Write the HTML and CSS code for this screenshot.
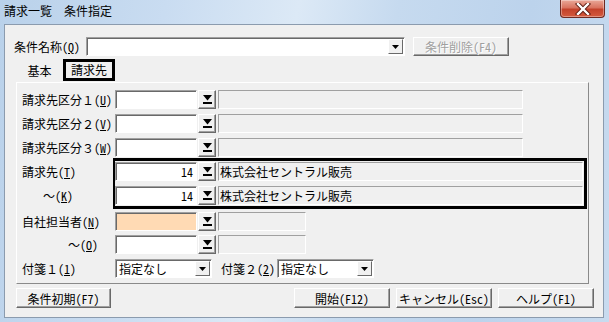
FILE: index.html
```html
<!DOCTYPE html>
<html lang="ja">
<head>
<meta charset="utf-8">
<title>請求一覧 条件指定</title>
<link rel="stylesheet" href="styles.css">
</head>
<body>
<div class="window">
  <div class="titlebar">
    <span class="title">請求一覧　条件指定</span>
    <div class="close">
      <svg width="16" height="12" viewBox="0 0 16 12"><path d="M3 1 L13 11 M13 1 L3 11" stroke="#5a1a10" stroke-width="4.2" stroke-linecap="square"/><path d="M3 1 L13 11 M13 1 L3 11" stroke="#fff" stroke-width="2.4" stroke-linecap="square"/></svg>
    </div>
  </div>
  <div class="client">
    <div class="toprow">
      <span class="lbl-top">条件名称<span class="hw">(<u>Q</u>)</span></span>
      <div class="combo">
        <span class="combo-text"></span>
        <span class="sbtn"><svg width="7" height="4" viewBox="0 0 7 4"><path d="M0 0H7L3.5 4Z" fill="#000"/></svg></span>
      </div>
      <button class="btn disabled del">条件削除<span class="hw">(F4)</span></button>
    </div>
    <div class="tabs">
      <div class="tab">基本</div>
      <div class="tab sel">請求先</div>
    </div>
    <div class="panel">
      <div class="row">
        <span class="lbl">請求先区分１<span class="hw">(<u>U</u>)</span></span>
        <span class="tb"></span>
        <span class="dd"><svg width="9" height="9" viewBox="0 0 9 9"><path d="M0 0H9L4.5 5.5Z" fill="#000"/><rect x="0" y="7" width="9" height="2" fill="#000"/></svg></span>
        <span class="ro w305"></span>
      </div>
      <div class="row">
        <span class="lbl">請求先区分２<span class="hw">(<u>V</u>)</span></span>
        <span class="tb"></span>
        <span class="dd"><svg width="9" height="9" viewBox="0 0 9 9"><path d="M0 0H9L4.5 5.5Z" fill="#000"/><rect x="0" y="7" width="9" height="2" fill="#000"/></svg></span>
        <span class="ro w305"></span>
      </div>
      <div class="row">
        <span class="lbl">請求先区分３<span class="hw">(<u>W</u>)</span></span>
        <span class="tb"></span>
        <span class="dd"><svg width="9" height="9" viewBox="0 0 9 9"><path d="M0 0H9L4.5 5.5Z" fill="#000"/><rect x="0" y="7" width="9" height="2" fill="#000"/></svg></span>
        <span class="ro w305"></span>
      </div>
      <div class="group">
        <div class="glabels">
          <span class="glbl">請求先<span class="hw">(<u>T</u>)</span></span>
          <span class="glbl ind1">～<span class="hw">(<u>K</u>)</span></span>
        </div>
        <div class="focusbox">
          <div class="frow">
            <span class="tb num hw">14</span>
            <span class="dd"><svg width="9" height="9" viewBox="0 0 9 9"><path d="M0 0H9L4.5 5.5Z" fill="#000"/><rect x="0" y="7" width="9" height="2" fill="#000"/></svg></span>
            <span class="ro grow">株式会社セントラル販売</span>
          </div>
          <div class="frow">
            <span class="tb num hw">14</span>
            <span class="dd"><svg width="9" height="9" viewBox="0 0 9 9"><path d="M0 0H9L4.5 5.5Z" fill="#000"/><rect x="0" y="7" width="9" height="2" fill="#000"/></svg></span>
            <span class="ro grow">株式会社セントラル販売</span>
          </div>
        </div>
      </div>
      <div class="row r-staff">
        <span class="lbl">自社担当者<span class="hw">(<u>N</u>)</span></span>
        <span class="tb peach"></span>
        <span class="dd"><svg width="9" height="9" viewBox="0 0 9 9"><path d="M0 0H9L4.5 5.5Z" fill="#000"/><rect x="0" y="7" width="9" height="2" fill="#000"/></svg></span>
        <span class="ro w88"></span>
      </div>
      <div class="row r-staff2">
        <span class="lbl ind2">～<span class="hw">(<u>O</u>)</span></span>
        <span class="tb"></span>
        <span class="dd"><svg width="9" height="9" viewBox="0 0 9 9"><path d="M0 0H9L4.5 5.5Z" fill="#000"/><rect x="0" y="7" width="9" height="2" fill="#000"/></svg></span>
        <span class="ro w88"></span>
      </div>
      <div class="row r-tag">
        <span class="lbl">付箋１<span class="hw">(<u>1</u>)</span></span>
        <div class="select">
          <span class="sel-text">指定なし</span>
          <span class="sbtn"><svg width="7" height="4" viewBox="0 0 7 4"><path d="M0 0H7L3.5 4Z" fill="#000"/></svg></span>
        </div>
        <span class="lbl2">付箋２<span class="hw">(<u>2</u>)</span></span>
        <div class="select">
          <span class="sel-text">指定なし</span>
          <span class="sbtn"><svg width="7" height="4" viewBox="0 0 7 4"><path d="M0 0H7L3.5 4Z" fill="#000"/></svg></span>
        </div>
      </div>
    </div>
    <div class="buttons">
      <button class="btn b-reset">条件初期<span class="hw">(F7)</span></button>
      <button class="btn b-start">開始<span class="hw">(F12)</span></button>
      <button class="btn b-cancel">キャンセル<span class="hw">(Esc)</span></button>
      <button class="btn b-help">ヘルプ<span class="hw">(F1)</span></button>
    </div>
  </div>
</div>
</body>
</html>
```
FILE: styles.css
```css
* { box-sizing: border-box; margin: 0; padding: 0; }
html, body { width: 609px; height: 322px; overflow: hidden; }
body {
  font-family: "Noto Sans CJK JP", "Noto Sans", sans-serif;
  font-size: 12px;
  color: #000;
  background: #c4d8ee;
}
u { text-decoration: underline; text-underline-offset: 1px; }
.hw { font-feature-settings: "hwid" 1; }

.window {
  width: 609px;
  height: 322px;
  display: flex;
  flex-direction: column;
  padding: 0 5px 4px 4px;
  background: linear-gradient(100deg, #b9d1ea 0%, #c9dcf1 25%, #dce9f6 45%, #c6daef 60%, #bcd3ec 80%, #c8dbef 100%);
}

.titlebar {
  height: 24px;
  display: flex;
  align-items: flex-start;
}
.title {
  padding-top: 3px;
  line-height: 16px;
  font-size: 12px;
  color: #000;
}
.close {
  margin-left: auto;
  margin-right: -1px;
  width: 45px;
  height: 18px;
  border: 1px solid #6e2a22;
  border-top: none;
  border-radius: 0 0 4px 4px;
  background: linear-gradient(180deg, #e9a898 0%, #d9735f 45%, #c3422b 55%, #d45a3e 100%);
  box-shadow: inset 0 0 0 1px rgba(255, 255, 255, 0.35);
  display: flex;
  align-items: center;
  justify-content: center;
}

.client {
  flex: 1;
  background: #f0f0f0;
  border: 1px solid #8b9bae;
  display: flex;
  flex-direction: column;
}

/* top row */
.toprow {
  margin-top: 12px;
  padding-left: 9px;
  height: 19px;
  display: flex;
  align-items: center;
}
.lbl-top { width: 72px; line-height: 19px; white-space: nowrap; }
.combo {
  width: 319px;
  height: 19px;
  background: #fff;
  border-top: 1px solid #a0a0a0;
  border-left: 1px solid #a0a0a0;
  border-right: 1px solid #fff;
  border-bottom: 1px solid #fff;
  box-shadow: inset 1px 1px 0 #696969;
  display: flex;
  justify-content: flex-end;
  align-items: stretch;
  padding: 1px 1px 1px 0;
}
.sbtn {
  width: 15px;
  background: #f0f0f0;
  border-top: 1px solid #fff;
  border-left: 1px solid #fff;
  border-right: 1px solid #696969;
  border-bottom: 1px solid #696969;
  display: flex;
  align-items: center;
  justify-content: center;
}

.btn {
  font-family: inherit;
  font-size: 12px;
  height: 20px;
  background: #f0f0f0;
  border-top: 1px solid #fff;
  border-left: 1px solid #fff;
  border-right: 1px solid #696969;
  border-bottom: 1px solid #696969;
  box-shadow: inset -1px -1px 0 #a0a0a0;
  color: #000;
  line-height: 17px;
  padding: 0;
  white-space: nowrap;
}
.btn.disabled { color: #a0a0a0; text-shadow: 1px 1px 0 #fff; }
.del { margin-left: 8px; width: 96px; height: 19px; }

/* tabs */
.tabs {
  margin-top: 4px;
  height: 22px;
  padding-left: 13px;
  display: flex;
  align-items: flex-end;
}
.tab {
  width: 43px;
  height: 18px;
  line-height: 14px;
  text-align: center;
  margin-right: 2px;
}
.tab.sel {
  width: 52px;
  border: 3px solid #000;
  line-height: 15px;
  margin-bottom: 1px;
  height: 22px;
}

/* panel */
.panel {
  margin-left: 11px;
  width: 573px;
  border-top: 1px solid #fff;
  border-left: 1px solid #fff;
  border-right: 1px solid #8a8a8a;
  border-bottom: 1px solid #8a8a8a;
  padding: 7px 0 5px 5px;
}
.row {
  height: 19px;
  display: flex;
  align-items: center;
  margin-top: 5px;
}
.row:first-child { margin-top: 0; }
.lbl { width: 93px; line-height: 19px; white-space: nowrap; }
.lbl.ind2 { padding-left: 46px; }

.tb {
  width: 82px;
  height: 19px;
  background: #fff;
  border-top: 1px solid #a0a0a0;
  border-left: 1px solid #a0a0a0;
  border-right: 1px solid #fff;
  border-bottom: 1px solid #fff;
  box-shadow: inset 1px 1px 0 #696969;
  line-height: 17px;
  padding: 0 3px;
}
.tb.num { text-align: right; }
.tb.peach { background: #ffdab4; }

.dd {
  width: 18px;
  height: 19px;
  margin-left: 1px;
  background: #f0f0f0;
  border-top: 1px solid #fff;
  border-left: 1px solid #fff;
  border-right: 1px solid #696969;
  border-bottom: 1px solid #696969;
  box-shadow: inset -1px -1px 0 #a0a0a0;
  display: flex;
  align-items: center;
  justify-content: center;
}

.ro {
  margin-left: 2px;
  height: 19px;
  background: #f0f0f0;
  border-top: 1px solid #a0a0a0;
  border-left: 1px solid #a0a0a0;
  border-right: 1px solid #fff;
  border-bottom: 1px solid #fff;
  line-height: 17px;
  padding-left: 1px;
  white-space: nowrap;
}
.ro.w305 { width: 305px; }
.ro.w88 { width: 88px; }
.ro.grow { flex: 1; margin-right: 1px; }

/* focus group */
.group {
  margin-top: 1px;
  display: flex;
}
.glabels {
  width: 91px;
  padding-top: 4px;
  display: flex;
  flex-direction: column;
  gap: 5px;
}
.glbl { height: 19px; line-height: 19px; white-space: nowrap; }
.glbl.ind1 { padding-left: 21px; }
.focusbox {
  width: 474px;
  border: 3px solid #000;
  border-left-width: 2px;
  padding: 1px 0;
  display: flex;
  flex-direction: column;
  gap: 5px;
}
.frow {
  height: 19px;
  display: flex;
  align-items: center;
}

.r-staff { margin-top: 3px; }
.r-staff2 { margin-top: 4px; }
.r-tag { margin-top: 5px; }

.select {
  width: 97px;
  height: 19px;
  background: #fff;
  border-top: 1px solid #a0a0a0;
  border-left: 1px solid #a0a0a0;
  border-right: 1px solid #fff;
  border-bottom: 1px solid #fff;
  box-shadow: inset 1px 1px 0 #696969;
  display: flex;
  align-items: stretch;
  padding: 1px 1px 1px 0;
}
.sel-text { flex: 1; line-height: 16px; padding-left: 3px; }
.lbl2 { margin-left: 9px; width: 56px; line-height: 19px; white-space: nowrap; }

/* bottom buttons */
.buttons {
  margin-top: 4px;
  padding: 0 9px 0 11px;
  display: flex;
  gap: 6px;
}
.b-reset { width: 95px; }
.b-start { width: 96px; margin-left: auto; }
.b-cancel { width: 96px; }
.b-help { width: 96px; }
```
